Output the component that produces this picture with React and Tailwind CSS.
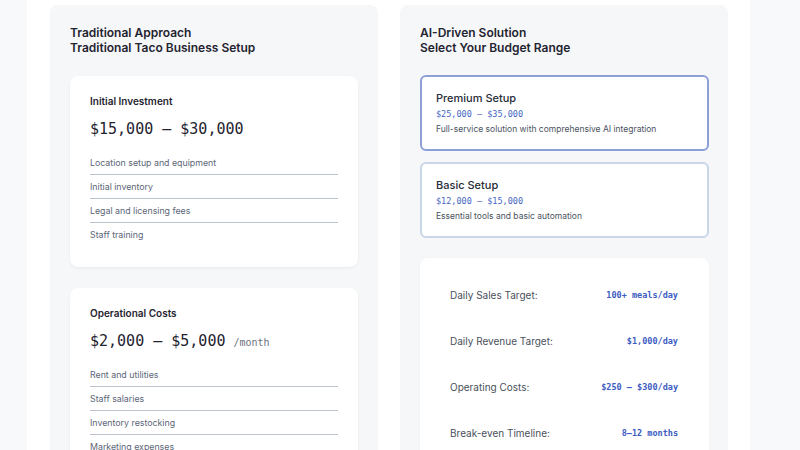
const mono = { fontFamily: '"DejaVu Sans Mono", "Liberation Mono", monospace' };

const traditional = [
  {
    title: 'Initial Investment',
    price: '$15,000 – $30,000',
    items: ['Location setup and equipment', 'Initial inventory', 'Legal and licensing fees', 'Staff training'],
  },
  {
    title: 'Operational Costs',
    price: '$2,000 – $5,000',
    unit: '/month',
    items: ['Rent and utilities', 'Staff salaries', 'Inventory restocking', 'Marketing expenses'],
  },
];

const tiers = [
  { name: 'Premium Setup', price: '$25,000 – $35,000', desc: 'Full-service solution with comprehensive AI integration', active: true },
  { name: 'Basic Setup', price: '$12,000 – $15,000', desc: 'Essential tools and basic automation' },
];

const targets = [
  ['Daily Sales Target:', '100+ meals/day'],
  ['Daily Revenue Target:', '$1,000/day'],
  ['Operating Costs:', '$250 – $300/day'],
  ['Break-even Timeline:', '8–12 months'],
];

function CostCard({ card }) {
  return (
    <div className="bg-white rounded-lg shadow-[0_1px_3px_rgba(15,23,42,0.06)] px-5 pt-[18px] pb-[21px]">
      <h3 className="text-[10px] leading-[14px] font-semibold text-[#1f2430]">{card.title}</h3>
      <div className="mt-[11px] flex items-baseline gap-2 text-[#1f2430]" style={mono}>
        <span className="text-[15px] leading-5">{card.price}</span>
        {card.unit && <span className="text-[10px] text-[#6b7280]">{card.unit}</span>}
      </div>
      <ul className="mt-[12px]">
        {card.items.map((item, i) => (
          <li
            key={item}
            className={`py-[6px] text-[8.8px] leading-[11px] text-[#5d6678] ${i < card.items.length - 1 ? 'border-b-[1.5px] border-[#bcc4d0]' : ''}`}
          >
            {item}
          </li>
        ))}
      </ul>
    </div>
  );
}

export default function App() {
  return (
    <div className="w-[800px] h-[450px] overflow-hidden bg-white flex" style={{ fontFamily: 'Inter, "Noto Sans", sans-serif' }}>
      <div className="w-[27px] shrink-0 bg-[#f8f9fb]" />
      <div className="w-[23px] shrink-0" />

      <section className="w-[328px] shrink-0 mt-[5px] bg-[#f6f7f9] rounded-t-lg px-5 pt-5">
        <h2 className="text-[12px] leading-[15px] font-semibold text-[#1f2430]">
          Traditional Approach
          <br />
          Traditional Taco Business Setup
        </h2>
        <div className="mt-[21px] flex flex-col gap-[21px]">
          {traditional.map((card) => (
            <CostCard key={card.title} card={card} />
          ))}
        </div>
      </section>

      <div className="w-[22px] shrink-0" />

      <section className="w-[328px] shrink-0 mt-[5px] bg-[#f6f7f9] rounded-t-lg px-5 pt-5">
        <h2 className="text-[12px] leading-[15px] font-semibold text-[#1f2430]">
          AI-Driven Solution
          <br />
          Select Your Budget Range
        </h2>
        <div className="mt-5 w-[289px] flex flex-col gap-[11px]">
          {tiers.map((t) => (
            <div
              key={t.name}
              className={`bg-white rounded-md border-2 px-[14px] pt-[14px] pb-[14px] ${t.active ? 'border-[#8c9fd6]' : 'border-[#c9d6e5]'}`}
            >
              <div className="text-[11px] leading-[14px] font-medium text-[#262b36]">{t.name}</div>
              <div className="mt-[3px] text-[8.5px] leading-[12px] text-[#4466c4]" style={mono}>{t.price}</div>
              <div className="mt-[3px] text-[8.5px] leading-[12px] text-[#4b5261]">{t.desc}</div>
            </div>
          ))}
        </div>
        <div className="mt-5 w-[289px] bg-white rounded-lg shadow-[0_1px_3px_rgba(15,23,42,0.05)] pl-[30px] pr-[31px] pt-[14px] pb-4">
          {targets.map(([label, value]) => (
            <div key={label} className="h-[46px] flex items-center justify-between">
              <span className="text-[10px] text-[#4a505c]">{label}</span>
              <span className="text-[8.5px] font-bold text-[#3d5cc2]" style={mono}>{value}</span>
            </div>
          ))}
        </div>
      </section>

      <div className="w-[22px] shrink-0" />
      <div className="flex-1 bg-[#f8f9fb]" />
    </div>
  );
}
